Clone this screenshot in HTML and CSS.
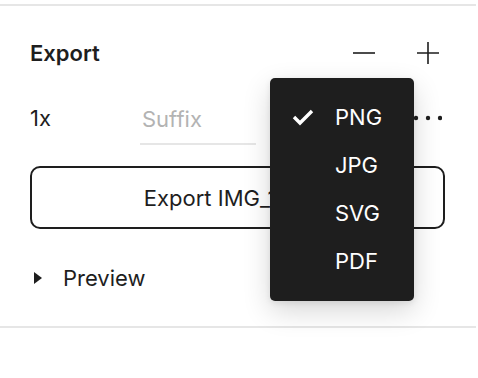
FILE: index.html
```html
<!DOCTYPE html>
<html>
<head>
<meta charset="utf-8">
<link rel="stylesheet" href="styles.css">
</head>
<body>
<div class="panel">
  <div class="header">
    <span class="title">Export</span>
    <span class="icon-btn">
      <svg width="24" height="24" viewBox="0 0 24 24"><path d="M1 12H23" stroke="#1e1e1e" stroke-width="1.6" fill="none"/></svg>
    </span>
    <span class="icon-btn">
      <svg width="24" height="24" viewBox="0 0 24 24"><path d="M1 12H23M12 1V23" stroke="#1e1e1e" stroke-width="1.6" fill="none"/></svg>
    </span>
  </div>
  <div class="row">
    <span class="scale">1x</span>
    <span class="suffix">Suffix</span>
    <span class="spacer"></span>
    <span class="icon-btn">
      <svg width="28" height="24" viewBox="0 0 28 24"><circle cx="2" cy="12" r="2.2" fill="#1e1e1e"/><circle cx="14" cy="12" r="2.2" fill="#1e1e1e"/><circle cx="26" cy="12" r="2.2" fill="#1e1e1e"/></svg>
    </span>
  </div>
  <button class="export-btn">Export IMG_12345</button>
  <div class="preview">
    <svg class="tri" width="9" height="12" viewBox="0 0 9 12"><path d="M0 0L8 6L0 12Z" fill="#1e1e1e"/></svg>
    <span>Preview</span>
  </div>
</div>
<div class="menu">
  <div class="item">
    <svg class="check" width="22" height="18" viewBox="0 0 22 18"><path d="M2 9L8 15L20 3" stroke="#fff" stroke-width="3.4" fill="none"/></svg>
    <span>PNG</span>
  </div>
  <div class="item"><span class="check"></span><span>JPG</span></div>
  <div class="item"><span class="check"></span><span>SVG</span></div>
  <div class="item"><span class="check"></span><span>PDF</span></div>
</div>
</body>
</html>
```
FILE: styles.css
```css
html, body {
  margin: 0;
  padding: 0;
  background: #fff;
}
body {
  font-family: Inter, "Noto Sans", sans-serif;
  font-size: 22px;
  color: #1e1e1e;
  width: 478px;
  height: 378px;
  position: relative;
  overflow: hidden;
}
.panel {
  margin-top: 4px;
  border-top: 2px solid #e6e6e6;
  border-bottom: 2px solid #e6e6e6;
  padding: 23px 36px 24px 30px;
  width: 476px;
  box-sizing: border-box;
}
.header {
  display: flex;
  align-items: center;
  height: 48px;
  gap: 40px;
}
.title {
  flex: 1;
  font-weight: 600;
}
.icon-btn {
  display: flex;
  align-items: center;
  justify-content: center;
}
.row {
  display: flex;
  align-items: flex-start;
  margin-top: 17px;
  height: 51px;
}
.scale {
  width: 110px;
  line-height: 48px;
}
.suffix {
  width: 114px;
  padding-left: 2px;
  padding-top: 1px;
  line-height: 48px;
  color: #b3b3b3;
  border-bottom: 2px solid #e6e6e6;
}
.spacer { flex: 1; }
.row .icon-btn {
  height: 48px;
  margin-right: -2px;
}
.export-btn {
  display: block;
  width: 415px;
  height: 63px;
  margin-top: 21px;
  border: 2px solid #1e1e1e;
  border-radius: 10px;
  background: #fff;
  font-family: inherit;
  font-size: 22px;
  color: #1e1e1e;
  padding: 0;
}
.preview {
  display: flex;
  align-items: center;
  height: 48px;
  margin-top: 25px;
}
.tri {
  margin-left: 4px;
  margin-right: 20px;
}
.menu {
  position: absolute;
  left: 270px;
  top: 78px;
  width: 144px;
  height: 223px;
  box-sizing: border-box;
  padding-top: 15px;
  background: #1e1e1e;
  border-radius: 5px;
  box-shadow: 0 10px 28px rgba(0,0,0,0.16), 0 2px 6px rgba(0,0,0,0.08);
  color: #fff;
}
.item {
  display: flex;
  align-items: center;
  height: 48px;
  padding-left: 22px;
}
.check {
  width: 22px;
  height: 18px;
  margin-right: 21px;
  flex: none;
}
```
